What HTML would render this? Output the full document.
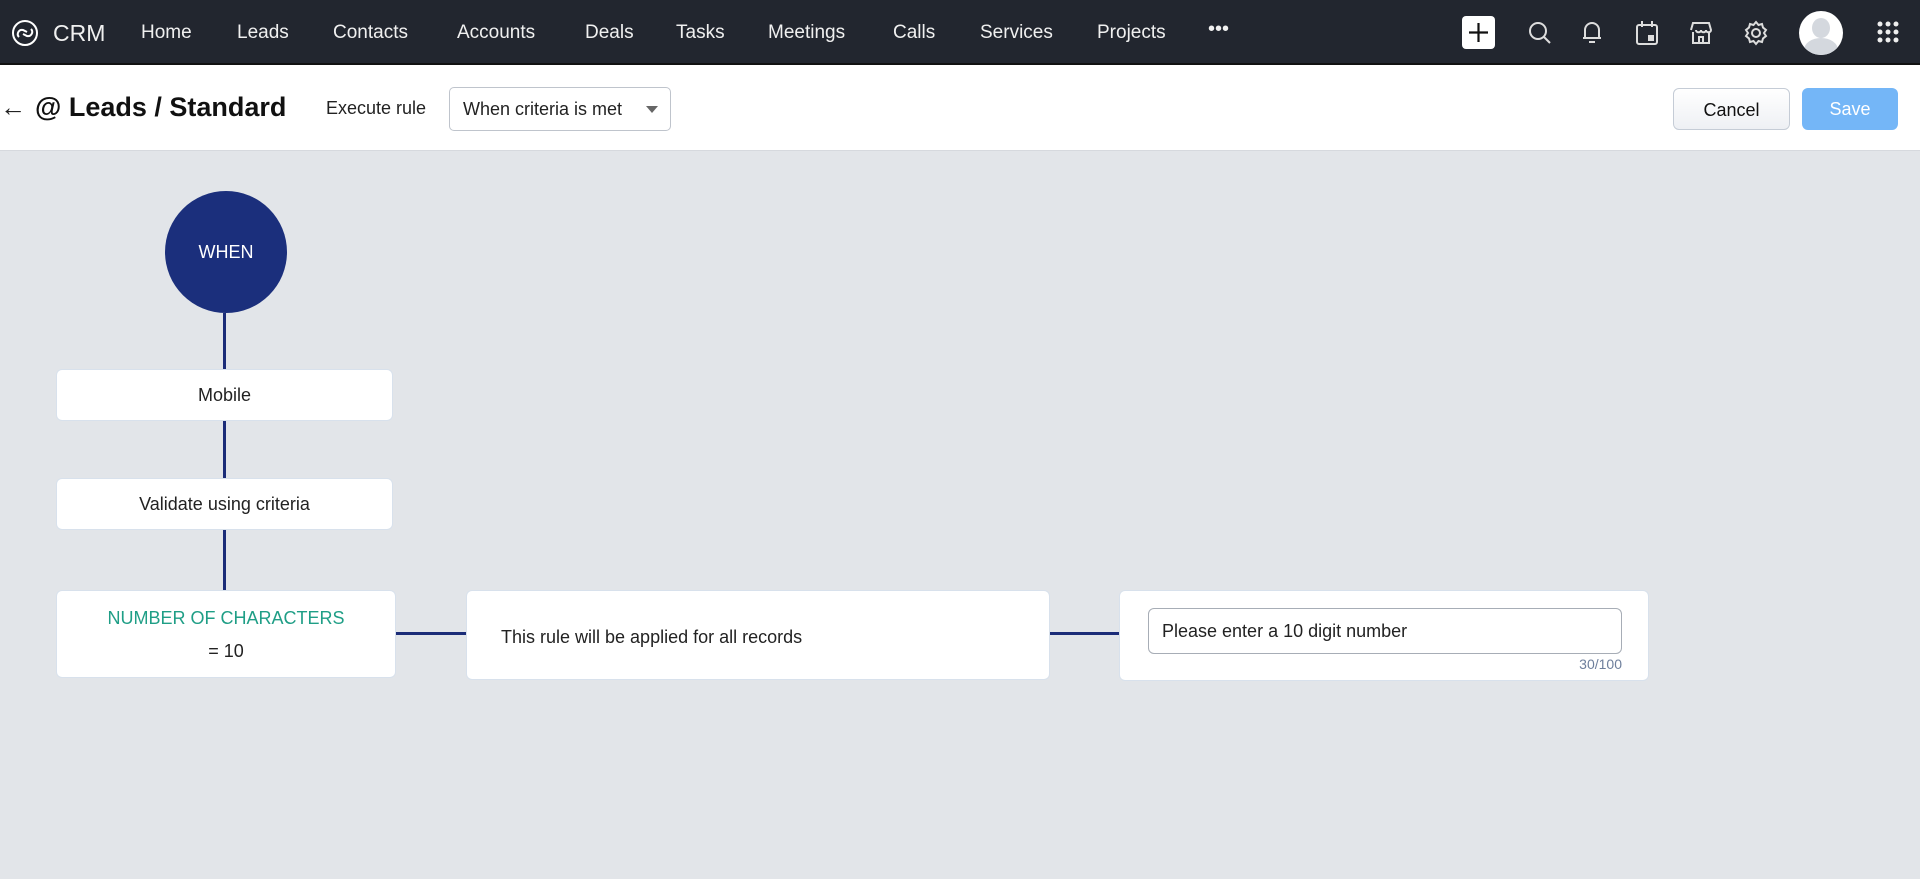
<!DOCTYPE html>
<html><head><meta charset="utf-8"><style>
*{box-sizing:border-box;margin:0;padding:0}
body{width:1920px;height:879px;overflow:hidden;background:#e2e5e9;font-family:"Liberation Sans",sans-serif;position:relative}
.nav{position:absolute;left:0;top:0;width:1920px;height:65px;background:#22262f;color:#fff;border-bottom:2px solid #111}
.nav .it{position:absolute;top:22px;font-size:19px;color:#f0f0f0}
.hdr{position:absolute;left:0;top:65px;width:1920px;height:86px;background:#fff;border-bottom:1px solid #d6d9de}
.box{position:absolute;background:#fff;border:1px solid #d8e1ec;border-radius:6px;font-size:18px;color:#222;text-align:center}
.vl{position:absolute;width:3px;background:#1b2c78;left:223px}
.hl{position:absolute;height:3px;background:#1b2c78;top:632px}
.ico{position:absolute;top:19px}
</style></head><body>
<div class="nav">
 <svg class="ico" style="left:9px;top:19px" width="32" height="28" viewBox="0 0 32 28" fill="none" stroke="#fff" stroke-width="2"><circle cx="16" cy="14" r="12"/><path d="M10 18c-3-3 0-8 4-7l4 2M22 10c3 3 0 8-4 7l-4-2"/></svg>
 <div class="it" style="left:53px;font-size:23px;top:20px">CRM</div>
 <div class="it" style="left:141px">Home</div>
 <div class="it" style="left:237px">Leads</div>
 <div class="it" style="left:333px">Contacts</div>
 <div class="it" style="left:457px">Accounts</div>
 <div class="it" style="left:585px">Deals</div>
 <div class="it" style="left:676px">Tasks</div>
 <div class="it" style="left:768px">Meetings</div>
 <div class="it" style="left:893px">Calls</div>
 <div class="it" style="left:980px">Services</div>
 <div class="it" style="left:1097px">Projects</div>
 <div class="it" style="left:1208px;top:18px;font-size:20px;letter-spacing:0px">•••</div>
 <div style="position:absolute;left:1462px;top:16px;width:33px;height:33px;background:#fff;border-radius:4px"><svg width="33" height="33"><path d="M16.5 7v19M7 16.5h19" stroke="#111" stroke-width="2.2"/></svg></div>
 <svg class="ico" style="left:1527px" width="26" height="28" fill="none" stroke="#ddd" stroke-width="2"><circle cx="11" cy="12" r="8"/><path d="M17 18l6 6"/></svg>
 <svg class="ico" style="left:1580px" width="24" height="28" fill="none" stroke="#ddd" stroke-width="2"><path d="M5 19V11a7 7 0 0114 0v8H5zM3 19h18M9 23h6"/></svg>
 <svg class="ico" style="left:1634px" width="26" height="28" fill="none" stroke="#ddd" stroke-width="2"><rect x="3" y="6" width="20" height="19" rx="2"/><path d="M8 2v6M18 2v6"/><rect x="15" y="17" width="4" height="4" fill="#ddd"/></svg>
 <svg class="ico" style="left:1688px" width="26" height="28" fill="none" stroke="#ddd" stroke-width="2"><path d="M3 11l2-7h16l2 7c0 3-5 3-5 0 0 3-5 3-5 0 0 3-5 3-5 0M5 13v11h16V13M11 24v-6h4v6"/></svg>
 <svg class="ico" style="left:1743px" width="26" height="28" fill="none" stroke="#ddd" stroke-width="2"><circle cx="13" cy="14" r="4"/><path d="M13 3l2.5 3 3.5-1 1 3.5 3 2.5-2 3 2 3-3 2.5-1 3.5-3.5-1-2.5 3-2.5-3-3.5 1-1-3.5-3-2.5 2-3-2-3 3-2.5 1-3.5 3.5 1z"/></svg>
 <div style="position:absolute;left:1799px;top:11px;width:44px;height:44px;border-radius:50%;background:#fff;overflow:hidden"><div style="position:absolute;left:13px;top:7px;width:18px;height:20px;border-radius:50%;background:#d4d8de"></div><div style="position:absolute;left:5px;top:27px;width:34px;height:24px;border-radius:50%;background:#d4d8de"></div></div>
 <svg class="ico" style="left:1877px;top:21px" width="22" height="22" fill="#eee"><circle cx="3" cy="3" r="2.5"/><circle cx="11" cy="3" r="2.5"/><circle cx="19" cy="3" r="2.5"/><circle cx="3" cy="11" r="2.5"/><circle cx="11" cy="11" r="2.5"/><circle cx="19" cy="11" r="2.5"/><circle cx="3" cy="19" r="2.5"/><circle cx="11" cy="19" r="2.5"/><circle cx="19" cy="19" r="2.5"/></svg>
</div>
<div class="hdr">
 <div style="position:absolute;left:0;top:27px;font-size:26px;color:#222">←</div>
 <div style="position:absolute;left:35px;top:27px;font-size:27px;font-weight:bold;color:#111">@ Leads / Standard</div>
 <div style="position:absolute;left:326px;top:33px;font-size:18px;color:#222">Execute rule</div>
 <div style="position:absolute;left:449px;top:22px;width:222px;height:44px;border:1px solid #bfc4cc;border-radius:5px;font-size:18px;color:#222;padding:11px 0 0 13px">When criteria is met<span style="position:absolute;right:12px;top:18px;border:6px solid transparent;border-top:7px solid #666"></span></div>
 <div style="position:absolute;left:1673px;top:23px;width:117px;height:42px;border:1px solid #c5ccd6;border-radius:6px;background:linear-gradient(#fff,#eef0f4);font-size:18px;text-align:center;padding-top:11px;color:#111">Cancel</div>
 <div style="position:absolute;left:1802px;top:23px;width:96px;height:42px;border-radius:6px;background:#74b6f7;font-size:18px;text-align:center;padding-top:11px;color:#fff">Save</div>
</div>
<div style="position:absolute;left:165px;top:191px;width:122px;height:122px;border-radius:50%;background:#1b2f7c;color:#fff;font-size:18px;text-align:center;line-height:122px">WHEN</div>
<div class="vl" style="top:313px;height:57px"></div>
<div class="box" style="left:56px;top:369px;width:337px;height:52px;padding-top:15px">Mobile</div>
<div class="vl" style="top:421px;height:57px"></div>
<div class="box" style="left:56px;top:478px;width:337px;height:52px;padding-top:15px">Validate using criteria</div>
<div class="vl" style="top:530px;height:60px"></div>
<div class="box" style="left:56px;top:590px;width:340px;height:88px;padding-top:17px"><div style="color:#1f9e86">NUMBER OF CHARACTERS</div><div style="margin-top:12px">= 10</div></div>
<div class="hl" style="left:396px;width:70px"></div>
<div class="box" style="left:466px;top:590px;width:584px;height:90px;text-align:left;padding:36px 0 0 34px">This rule will be applied for all records</div>
<div class="hl" style="left:1050px;width:69px"></div>
<div class="box" style="left:1119px;top:590px;width:530px;height:91px">
 <div style="position:absolute;left:28px;top:17px;width:474px;height:46px;border:1px solid #a7adb6;border-radius:6px;text-align:left;padding:12px 0 0 13px;font-size:18px">Please enter a 10 digit number</div>
 <div style="position:absolute;right:26px;top:65px;font-size:14px;color:#6e7f9c">30/100</div>
</div>
</body></html>
